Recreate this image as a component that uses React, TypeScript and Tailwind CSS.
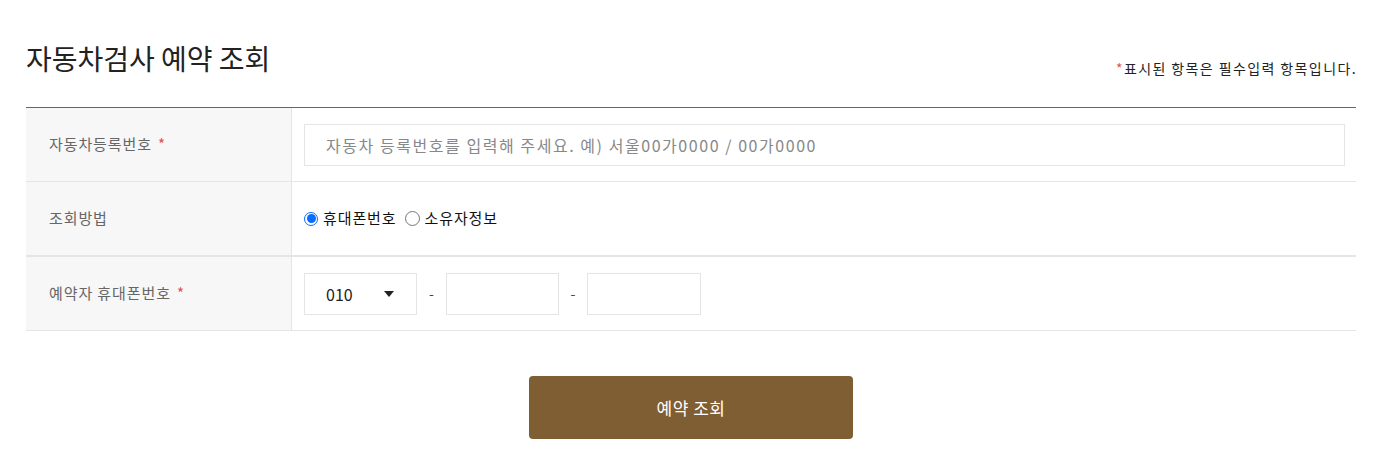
import React from "react";

const font = { fontFamily: '"Noto Sans CJK KR", "Noto Sans", sans-serif' };

export default function App() {
  return (
    <div className="w-[1390px] h-[468px] bg-white" style={font}>
      <div className="px-[26px] pt-[38px] w-[1382px]">
        <div className="flex justify-between items-end mb-[29px]">
          <h1 className="text-[28px] leading-[40px] text-[#222] font-normal">자동차검사 예약 조회</h1>
          <p className="text-[14px] leading-[20px] text-[#222] tracking-[1.4px] mr-[-1px]">
            <span className="text-[#e05050]">*</span>표시된 항목은 필수입력 항목입니다.
          </p>
        </div>
        <div className="border-t border-[#666]">
          <div className="flex h-[74px] border-b border-[#e5e5e5]">
            <div className="w-[266px] bg-[#f7f7f7] border-r border-[#e5e5e5] flex items-center pl-[23px] text-[15px] text-[#666] tracking-[0.9px]">
              <span>자동차등록번호</span>
              <span className="text-[#e05050] ml-[6px]">*</span>
            </div>
            <div className="flex-1 flex items-center pl-[12px] pr-[11px]">
              <input
                className="w-full h-[42px] border border-[#e5e5e5] pl-[21px] text-[16px] tracking-[1.55px] outline-none placeholder:text-[#888]"
                placeholder="자동차 등록번호를 입력해 주세요. 예) 서울00가0000 / 00가0000"
                style={font}
              />
            </div>
          </div>
          <div className="flex h-[75px] border-b-2 border-[#e5e5e5]">
            <div className="w-[266px] bg-[#f7f7f7] border-r border-[#e5e5e5] flex items-center pl-[23px] text-[15px] text-[#666] tracking-[0.9px]">
              조회방법
            </div>
            <div className="flex-1 flex items-center pl-[12px] text-[15px] text-[#111] tracking-[0.9px]">
              <label className="flex items-center">
                <span className="w-[14px] h-[14px] rounded-full border border-[#0a6cff] flex items-center justify-center mr-[5px]">
                  <span className="w-[9px] h-[9px] rounded-full bg-[#0a6cff]" />
                </span>
                휴대폰번호
              </label>
              <label className="flex items-center ml-[8px]">
                <span className="w-[15px] h-[15px] rounded-full border border-[#767676] mr-[5px]" />
                소유자정보
              </label>
            </div>
          </div>
          <div className="flex h-[74px] border-b border-[#e5e5e5]">
            <div className="w-[266px] bg-[#f7f7f7] border-r border-[#e5e5e5] flex items-center pl-[23px] text-[15px] text-[#666] tracking-[0.9px]">
              <span>예약자 휴대폰번호</span>
              <span className="text-[#e05050] ml-[6px]">*</span>
            </div>
            <div className="flex-1 flex items-center pl-[12px]">
              <div className="w-[113px] h-[42px] border border-[#e5e5e5] flex items-center justify-between pl-[21px] pr-[22px] text-[16px] text-[#222]">
                <span>010</span>
                <svg width="10" height="6" viewBox="0 0 10 6"><path d="M0 0 L10 0 L5 6 Z" fill="#222" /></svg>
              </div>
              <span className="w-[29px] text-center text-[14px] text-[#444]">-</span>
              <div className="w-[113px] h-[42px] border border-[#e5e5e5]" />
              <span className="w-[28px] text-center text-[14px] text-[#444]">-</span>
              <div className="w-[114px] h-[42px] border border-[#e5e5e5]" />
            </div>
          </div>
        </div>
        <div className="flex justify-center mt-[45px]">
          <button className="w-[324px] h-[63px] rounded-[4px] bg-[#7f5e34] text-white text-[17px] tracking-[0.5px]" style={font}>
            예약 조회
          </button>
        </div>
      </div>
    </div>
  );
}
